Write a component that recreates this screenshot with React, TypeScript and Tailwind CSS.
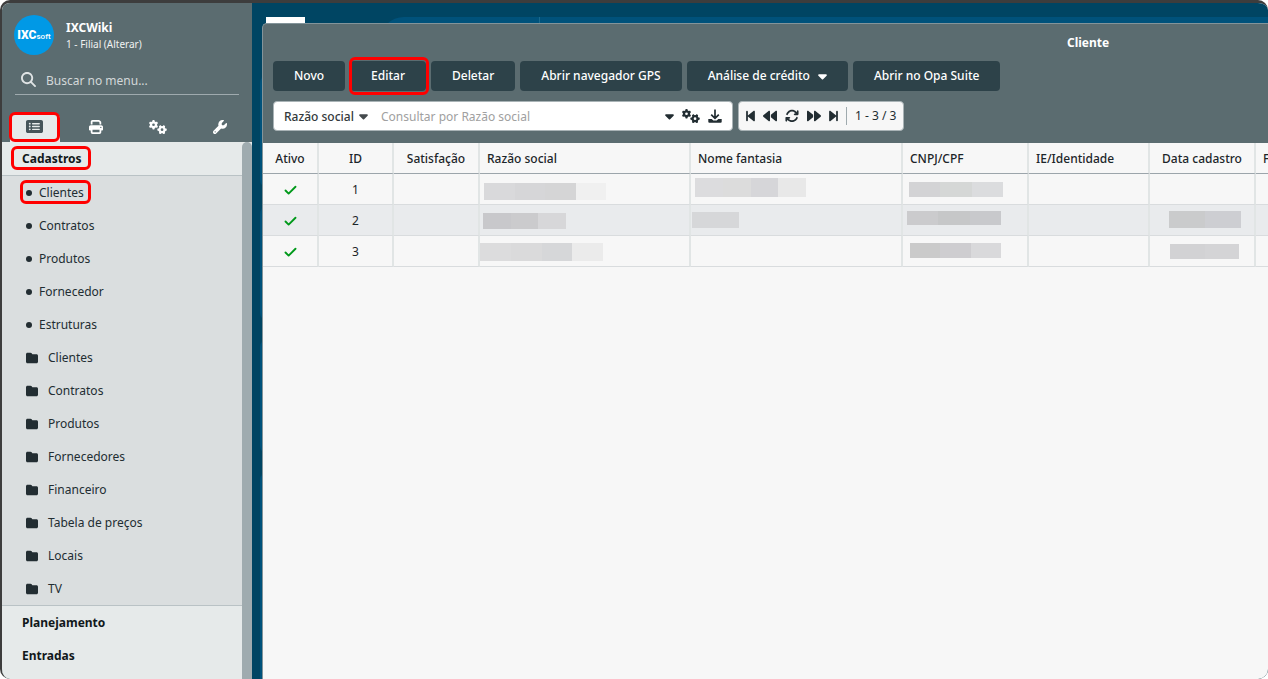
import type { ReactNode } from "react";
import { Check } from "lucide-react";
import {
  FaArrowsRotate,
  FaBackward,
  FaBackwardStep,
  FaCaretDown,
  FaFolder,
  FaForward,
  FaForwardStep,
  FaGears,
  FaMagnifyingGlass,
  FaPrint,
  FaRectangleList,
  FaWrench,
} from "react-icons/fa6";

const shortcuts = ["Clientes", "Contratos", "Produtos", "Fornecedor", "Estruturas"];
const folders = [
  "Clientes",
  "Contratos",
  "Produtos",
  "Fornecedores",
  "Financeiro",
  "Tabela de preços",
  "Locais",
  "TV",
];

function Highlight({ className }: { className: string }) {
  return (
    <span
      aria-hidden="true"
      className={`pointer-events-none absolute z-10 rounded-md border-3 border-[#ff0000] ${className}`}
    />
  );
}

function DownloadIcon() {
  return (
    <svg viewBox="0 0 14 14" className="size-[14px]" fill="none" stroke="currentColor">
      <path d="M7 0.5v8.5M3.2 5.6L7 9.3l3.8-3.7" strokeWidth="1.7" />
      <path
        d="M0.3 10h3.4l1.6 1.5h3.4L10.300 10h3.400v2.800a1 1 0 0 1-1 1H1.300a1 1 0 0 1-1-1z"
        fill="currentColor"
        stroke="none"
      />
    </svg>
  );
}

function TabButton({ label, active, children }: { label: string; active?: boolean; children: ReactNode }) {
  return (
    <button
      type="button"
      aria-label={label}
      className={
        active
          ? "relative flex h-[29px] w-[50px] items-center justify-center rounded-t-md bg-[#e6eaea] pr-[2px] pb-[2px] text-[#46555a]"
          : "relative flex h-[29px] w-[50px] items-center justify-center pr-[2px] pb-[2px] text-white"
      }
    >
      {children}
    </button>
  );
}

function Sidebar() {
  return (
    <aside className="flex w-[250px] shrink-0 flex-col overflow-hidden rounded-tl-md bg-[#5b6c70]">
      <div className="flex items-center gap-3 px-3 pt-3">
        <div className="flex size-10 items-center justify-center rounded-full bg-[#0099e6] font-['Roboto',sans-serif] leading-none text-white">
          <span className="flex items-baseline">
            <span className="text-[12px] font-black">IXC</span>
            <span className="text-[8px] font-medium">soft</span>
          </span>
        </div>
        <div className="flex flex-col">
          <span className="text-[12px] leading-[17px] font-bold text-white">IXCWiki</span>
          <a href="#filial" className="text-[10px] leading-4 text-[#f0f2f2]">
            1 - Filial (Alterar)
          </a>
        </div>
      </div>

      <label className="mx-[13px] mt-3 flex h-7 items-center gap-[10px] border-b border-[#9faaae] pl-[6px]">
        <FaMagnifyingGlass className="mb-[2px] size-[15px] shrink-0 text-[#dfe3e4]" />
        <input
          type="text"
          aria-label="Buscar no menu"
          placeholder="Buscar no menu..."
          className="w-full min-w-0 bg-transparent text-[12px] text-white outline-none placeholder:text-[#d3d8d9]"
        />
      </label>

      <nav aria-label="Módulos" className="mt-[18px] flex gap-3 pl-2">
        <TabButton label="Cadastros" active>
          <FaRectangleList className="size-[17px]" />
          <Highlight className="-top-px right-0 bottom-0 -left-px" />
        </TabButton>
        <TabButton label="Relatórios">
          <FaPrint className="size-[14px]" />
        </TabButton>
        <TabButton label="Configurações">
          <FaGears className="size-[18px]" />
        </TabButton>
        <TabButton label="Ferramentas">
          <FaWrench className="size-[14px]" />
        </TabButton>
      </nav>

      <div className="flex flex-1 overflow-hidden bg-[#e6eaea]">
        <div className="flex-1 text-[12px] text-[#222d32]">
          <a
            href="#cadastros"
            className="relative flex h-[34px] items-center border-b border-[#b9c2c5] pl-5 font-bold text-[#11181b]"
          >
            Cadastros
            <Highlight className="top-1 left-[9px] h-6 w-20" />
          </a>
          <ul className="border-b border-[#b9c2c5] bg-[#dadedf]">
            {shortcuts.map((name, i) => (
              <li key={name}>
                <a href="#atalho" className="relative flex h-[33px] items-center gap-[7px] pl-6">
                  <span className="size-[6px] rounded-full bg-[#222d32]" />
                  {name}
                  {i === 0 && <Highlight className="top-1 left-[18px] h-6 w-[71px]" />}
                </a>
              </li>
            ))}
            {folders.map((name) => (
              <li key={name}>
                <a href="#pasta" className="flex h-[33px] items-center gap-[10px] pl-6">
                  <FaFolder className="size-3" />
                  {name}
                </a>
              </li>
            ))}
          </ul>
          <a href="#planejamento" className="flex h-[33px] items-center pl-5 font-bold text-[#11181b]">
            Planejamento
          </a>
          <a href="#entradas" className="flex h-[33px] items-center pl-5 font-bold text-[#11181b]">
            Entradas
          </a>
        </div>
        <div className="w-[10px] shrink-0 rounded-t-full bg-[#9fabaf]" />
      </div>
    </aside>
  );
}

function Backdrop() {
  return (
    <div aria-hidden="true" className="absolute inset-0 overflow-hidden">
      <div className="absolute top-[14px] left-[14px] h-8 w-[39px] bg-white" />
      <div className="absolute top-[14px] right-0 left-[128px] flex h-12 rounded-tl-[24px] bg-[#00527b]">
        <div className="w-40 border-r border-[#1a6a8e]" />
      </div>
      <div className="absolute top-[72px] bottom-0 left-2 flex w-20 flex-col gap-[18px]">
        <div className="h-[113px] shrink-0 rounded-lg bg-[#00527b]" />
        <div className="h-[115px] shrink-0 rounded-lg bg-[#00527b]" />
        <div className="h-[115px] shrink-0 rounded-lg bg-[#00527b]" />
        <div className="h-[240px] shrink-0 rounded-lg bg-[#00527b]" />
      </div>
    </div>
  );
}

const actionClass =
  "relative flex h-[30px] items-center gap-2 rounded-[4px] bg-[#2d4249] px-[21px] text-[12px] font-medium whitespace-nowrap text-white";

function Toolbar() {
  return (
    <div className="flex gap-[5px] px-[10px]">
      <button type="button" className={actionClass}>
        Novo
      </button>
      <button type="button" className={actionClass}>
        Editar
        <Highlight className="-inset-y-1 -right-[3px] -left-px" />
      </button>
      <button type="button" className={actionClass}>
        Deletar
      </button>
      <button type="button" className={actionClass}>
        Abrir navegador GPS
      </button>
      <button type="button" className={actionClass}>
        Análise de crédito
        <FaCaretDown className="h-[14px] w-[9px]" />
      </button>
      <button type="button" className={actionClass}>
        Abrir no Opa Suite
      </button>
    </div>
  );
}

function SearchBar() {
  return (
    <div className="flex gap-[5px] px-[10px] text-[12px] text-[#222d32]">
      <div className="flex h-[30px] w-[460px] items-center rounded-[4px] border border-[#a9b3b6] bg-white px-[10px]">
        <div className="relative flex shrink-0 items-center">
          <select
            aria-label="Campo de consulta"
            className="w-[86px] appearance-none bg-transparent pt-[2px] font-medium text-[#33393c] outline-none"
          >
            <option>Razão social</option>
          </select>
          <FaCaretDown className="pointer-events-none absolute right-[2px] h-[14px] w-[9px] text-[#444a4d]" />
        </div>
        <input
          type="text"
          aria-label="Consultar"
          placeholder="Consultar por Razão social"
          className="ml-[11px] min-w-0 flex-1 pt-[2px] outline-none placeholder:text-[#a0a0a0]"
        />
        <div className="flex items-center gap-2">
          <button type="button" aria-label="Mais opções">
            <FaCaretDown className="h-[14px] w-[9px]" />
          </button>
          <button type="button" aria-label="Configurar">
            <FaGears className="size-[18px]" />
          </button>
          <button type="button" aria-label="Baixar">
            <DownloadIcon />
          </button>
        </div>
      </div>
      <div className="flex h-[30px] items-center gap-2 rounded-[4px] border border-[#a9b3b6] bg-[#f7f7f7] px-[7px]">
        <button type="button" aria-label="Primeira página">
          <FaBackwardStep className="h-[14px] w-[9px]" />
        </button>
        <button type="button" aria-label="Página anterior">
          <FaBackward className="size-[14px]" />
        </button>
        <button type="button" aria-label="Atualizar">
          <FaArrowsRotate className="size-[14px]" />
        </button>
        <button type="button" aria-label="Próxima página">
          <FaForward className="size-[14px]" />
        </button>
        <button type="button" aria-label="Última página">
          <FaForwardStep className="h-[14px] w-[9px]" />
        </button>
        <span className="border-l border-[#9faaae] pl-2 whitespace-nowrap">1 - 3 / 3</span>
      </div>
    </div>
  );
}

function Masked({ box, parts }: { box: string; parts: string[] }) {
  return (
    <div className={`flex ${box}`}>
      {parts.map((color, i) => (
        <span key={i} className={`flex-1 ${color}`} />
      ))}
    </div>
  );
}

const columns = [
  { title: "Ativo", width: "w-[56px]", align: "text-center" },
  { title: "ID", width: "w-[75px]", align: "text-center" },
  { title: "Satisfação", width: "w-[86px]", align: "text-center" },
  { title: "Razão social", width: "w-[211px]", align: "pl-[7px] text-left" },
  { title: "Nome fantasia", width: "w-[212px]", align: "pl-[7px] text-left" },
  { title: "CNPJ/CPF", width: "w-[126px]", align: "pl-[7px] text-left" },
  { title: "IE/Identidade", width: "w-[121px]", align: "pl-[7px] text-left" },
  { title: "Data cadastro", width: "w-[106px]", align: "text-center" },
  { title: "F", width: "w-[120px]", align: "pl-[7px] text-left" },
];

const rows: { id: number; cells: ReactNode[] }[] = [
  {
    id: 1,
    cells: [
      null,
      <Masked box="mt-[9px] ml-1 h-[17px] w-[122px]" parts={["bg-[#d9d9db]", "bg-[#d6d6d8]", "bg-[#d5d5d6]", "bg-[#f0f0f0]"]} />,
      <Masked box="mt-1 ml-1 h-[19px] w-[111px]" parts={["bg-[#dcdcde]", "bg-[#dcdcdc]", "bg-[#d6d6d9]", "bg-[#e8e8e8]"]} />,
      <Masked box="mt-2 ml-[6px] h-[15px] w-[94px]" parts={["bg-[#d3d3d5]", "bg-[#d5d7d6]", "bg-[#dbdcde]"]} />,
      null,
      null,
      null,
    ],
  },
  {
    id: 2,
    cells: [
      null,
      <Masked box="mt-2 ml-[3px] h-4 w-[83px]" parts={["bg-[#c8c8cb]", "bg-[#cbcbcd]", "bg-[#d7d7d9]"]} />,
      <Masked box="mt-[7px] ml-px h-4 w-[47px]" parts={["bg-[#d6d7d9]"]} />,
      <Masked box="mt-[6px] ml-1 h-[14px] w-[94px]" parts={["bg-[#cbcbcd]", "bg-[#c6c7c8]", "bg-[#c8c9cc]"]} />,
      null,
      <Masked box="mt-[6px] ml-[19px] h-[17px] w-[72px]" parts={["bg-[#cacbcc]", "bg-[#cdced2]"]} />,
      null,
    ],
  },
  {
    id: 3,
    cells: [
      null,
      <Masked box="mt-[7px] h-[18px] w-[123px]" parts={["bg-[#dcdcdd]", "bg-[#dadadb]", "bg-[#d6d7d9]", "bg-[#ebebeb]"]} />,
      null,
      <Masked box="mt-[7px] ml-[7px] h-[15px] w-[91px]" parts={["bg-[#cacaca]", "bg-[#cecdd0]", "bg-[#d9d9db]"]} />,
      null,
      <Masked box="mt-2 ml-5 h-[15px] w-[69px]" parts={["bg-[#d2d2d4]", "bg-[#d4d4d6]"]} />,
      null,
    ],
  },
];

function ClientTable() {
  return (
    <table className="w-[1113px] table-fixed border-separate border-spacing-0 text-[12px] text-[#1c2529]">
      <thead>
        <tr className="h-[31px]">
          {columns.map((c) => (
            <th
              key={c.title}
              scope="col"
              className={`border-r-2 border-b border-r-[#e1e5e5] border-b-[#9ca5ab] pt-[2px] font-medium whitespace-nowrap ${c.width} ${c.align}`}
            >
              {c.title}
            </th>
          ))}
        </tr>
      </thead>
      <tbody>
        {rows.map((row) => (
          <tr key={row.id} className="h-[31px] even:bg-[#e9ebed]">
            <td className="border-r-2 border-b border-r-[#e1e5e5] border-b-[#d9dcde] pt-[2px]">
              <Check aria-label="Ativo" strokeWidth={3} className="mx-auto size-[15px] text-[#00991a]" />
            </td>
            <td className="border-r-2 border-b border-r-[#e1e5e5] border-b-[#d9dcde] pt-[2px] text-center">{row.id}</td>
            {row.cells.map((cell, i) => (
              <td key={i} className="border-r-2 border-b border-r-[#e1e5e5] border-b-[#d9dcde] p-0 align-top">
                {cell}
              </td>
            ))}
          </tr>
        ))}
      </tbody>
    </table>
  );
}

export default function App() {
  return (
    <div className="bg-white font-['Noto_Sans',sans-serif]">
      <div className="flex h-screen min-h-[600px] overflow-hidden rounded-[10px] border-t-3 border-l-2 border-[#3d3d3d] bg-[#f7f7f7]">
        <Sidebar />
        <div className="relative flex min-w-0 flex-1 bg-[#004563] pt-5 pl-[10px]">
          <Backdrop />
          <main className="relative flex min-w-0 flex-1 flex-col overflow-hidden rounded-tl-[5px] border-t border-l border-[#83949a] bg-[#5b6c70]">
            <h1 className="h-[37px] pt-[11px] pl-[804px] text-[12px] leading-4 font-bold text-white">Cliente</h1>
            <Toolbar />
            <div className="h-[10px] shrink-0" />
            <SearchBar />
            <div className="mt-3 flex-1 overflow-hidden bg-[#f7f7f7]">
              <ClientTable />
            </div>
          </main>
        </div>
      </div>
    </div>
  );
}
